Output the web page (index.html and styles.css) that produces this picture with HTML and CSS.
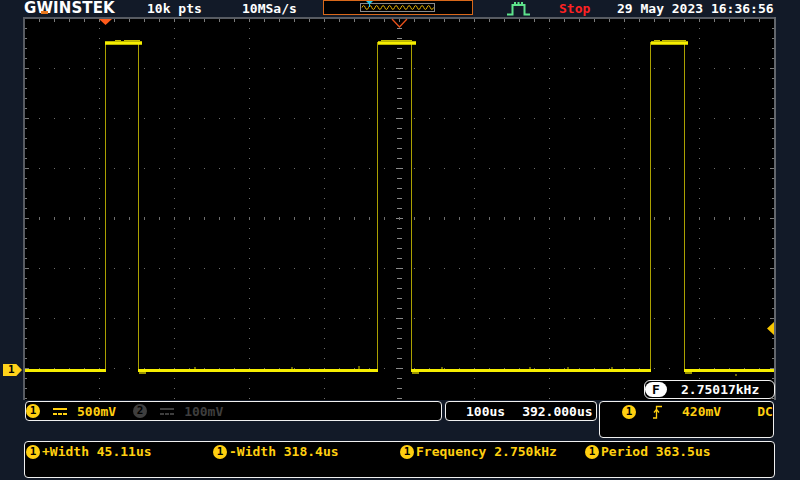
FILE: index.html
```html
<!DOCTYPE html>
<html>
<head>
    <title>GW Instek Scope Capture</title>
    <link rel="stylesheet" href="styles.css">
</head>
<body>
    <div class="scope">
        <header class="topbar">
            <div class="logo">G<span class="w">W</span>INSTEK</div>
            <span class="rec">10k pts</span>
            <span class="rate">10MSa/s</span>
            <svg class="memory" width="150" height="15" viewBox="0 0 150 15">
                <rect x="0.5" y="0.5" width="149" height="14" fill="#000" stroke="#d8681a"/>
                <rect x="37.5" y="3.5" width="74" height="8" fill="none" stroke="#8a8a8a"/>
                <path d="M39 7.5 q1.6 -4 3.25 0 t3.25 0 t3.25 0 t3.25 0 t3.25 0 t3.25 0 t3.25 0 t3.25 0 t3.25 0 t3.25 0 t3.25 0 t3.25 0 t3.25 0 t3.25 0 t3.25 0 t3.25 0 t3.25 0 t3.25 0 t3.25 0 t3.25 0 t3.25 0 t3.25 0" fill="none" stroke="#e2b000" stroke-width="1"/>
                <polygon points="43,1 50,1 46.5,4.5" fill="#22c4e6"/>
                <rect x="46" y="4" width="1" height="3" fill="#22c4e6"/>
            </svg>
            <svg class="trigmode" width="23" height="15" viewBox="0 0 23 15">
                <path d="M0 13.5 H5.5 V4 H17.5 V13.5 H23" fill="none" stroke="#5ee38c" stroke-width="2"/>
                <rect x="7" y="1" width="2" height="2" fill="#5ee38c"/>
                <rect x="10.5" y="1" width="2" height="2" fill="#5ee38c"/>
                <rect x="14" y="1" width="2" height="2" fill="#5ee38c"/>
            </svg>
            <span class="status">Stop</span>
            <span class="clock">29 May 2023 16:36:56</span>
        </header>

        <div class="screen">
            <div class="gutter">
                <div class="ch-marker">1</div>
            </div>
            <svg class="graticule" width="753" height="383" viewBox="23 17 753 383">
                <defs>
                    <pattern id="vdots" x="24" y="18" width="75" height="10" patternUnits="userSpaceOnUse">
                        <rect width="1" height="1" fill="#6e6e6e"/>
                    </pattern>
                    <pattern id="hdots" x="24" y="18" width="15" height="50" patternUnits="userSpaceOnUse">
                        <rect width="1" height="1" fill="#6e6e6e"/>
                    </pattern>
                    <pattern id="vcenter" x="0" y="18" width="800" height="50" patternUnits="userSpaceOnUse">
                        <rect x="396" y="0" width="7" height="1" fill="#8a8a8a"/>
                        <rect x="397" y="10" width="5" height="1" fill="#8a8a8a"/>
                        <rect x="397" y="20" width="5" height="1" fill="#8a8a8a"/>
                        <rect x="397" y="30" width="5" height="1" fill="#8a8a8a"/>
                        <rect x="397" y="40" width="5" height="1" fill="#8a8a8a"/>
                    </pattern>
                    <pattern id="hcenter" x="24" y="0" width="15" height="800" patternUnits="userSpaceOnUse">
                        <rect x="0" y="217" width="1" height="3" fill="#6e6e6e"/>
                    </pattern>
                    <pattern id="topticks" x="24" y="0" width="15" height="800" patternUnits="userSpaceOnUse">
                        <rect x="0" y="19" width="1" height="3" fill="#7a7a7a"/>
                    </pattern>
                    <pattern id="sideticks" x="0" y="18" width="800" height="50" patternUnits="userSpaceOnUse">
                        <rect x="25" y="0" width="4" height="1" fill="#7a7a7a"/>
                        <rect x="25" y="10" width="2" height="1" fill="#7a7a7a"/>
                        <rect x="25" y="20" width="2" height="1" fill="#7a7a7a"/>
                        <rect x="25" y="30" width="2" height="1" fill="#7a7a7a"/>
                        <rect x="25" y="40" width="2" height="1" fill="#7a7a7a"/>
                        <rect x="770" y="0" width="4" height="1" fill="#7a7a7a"/>
                        <rect x="772" y="10" width="2" height="1" fill="#7a7a7a"/>
                        <rect x="772" y="20" width="2" height="1" fill="#7a7a7a"/>
                        <rect x="772" y="30" width="2" height="1" fill="#7a7a7a"/>
                        <rect x="772" y="40" width="2" height="1" fill="#7a7a7a"/>
                    </pattern>
                </defs>

                <rect x="23" y="17" width="753" height="383" fill="#000"/>
                <rect x="25" y="19" width="749" height="381" fill="url(#vdots)"/>
                <rect x="25" y="19" width="749" height="381" fill="url(#hdots)"/>
                <rect x="395" y="19" width="9" height="381" fill="url(#vcenter)"/>
                <rect x="25" y="214" width="749" height="9" fill="url(#hcenter)"/>
                <rect x="25" y="19" width="749" height="4" fill="url(#topticks)"/>
                <rect x="25" y="19" width="749" height="381" fill="url(#sideticks)"/>

                <!-- frame -->
                <rect x="23" y="17" width="753" height="2" fill="#575b62"/>
                <rect x="23" y="17" width="2" height="383" fill="#575b62"/>
                <rect x="774" y="17" width="2" height="383" fill="#62666c"/>

                <!-- trace -->
                <path d="M105.5 370 V42 M138.5 42 V370 M377.5 370 V42 M411.5 42 V370 M650.5 370 V42 M684.5 42 V370" stroke="#aaa000" stroke-width="1" fill="none"/>
                <path d="M25 370.5 H106 M138 370.5 H378 M411 370.5 H651 M684 370.5 H774" stroke="#f6ee00" stroke-width="3" fill="none"/>
                <path d="M105 43 H142 M378 43 H416 M651 43 H688" stroke="#f6ee00" stroke-width="3.5" fill="none"/>
                <path d="M115 40.5 H121 M124 40.5 H140 M381 40.5 H412 M654 40.5 H660 M662 40.5 H686" stroke="#c8c000" stroke-width="1" fill="none"/>
                <path d="M139 373 H146 M412 373 H419 M685 373 H692" stroke="#9a9400" stroke-width="2" fill="none"/>
                <path d="M195 367 V369 M292 367 V369 M359 366 V369 M442 367 V369 M530 367 V369 M568 367 V369 M612 367 V369 M736 374 V376" stroke="#d8d000" stroke-width="1" fill="none"/>

                <!-- markers -->
                <polygon points="99,19 112,19 105.5,25" fill="#ff5a1a"/>
                <polyline points="392,19 399.5,27 407,19" fill="none" stroke="#e8501a" stroke-width="1.3"/>
                <polygon points="774,322 767,328.5 774,335" fill="#f7c600"/>
            </svg>
            <div class="rgutter"></div>

            <div class="counter">
                <span class="counter-tag">F</span>
                <span class="counter-value">2.75017kHz</span>
            </div>
        </div>

        <div class="panels">
            <div class="panel vert">
                <span class="ch ch1">1</span>
                <svg class="coupling" width="14" height="7" viewBox="0 0 14 7">
                    <rect x="0" y="0" width="14" height="2" fill="#ffcf10"/>
                    <rect x="0" y="5" width="4" height="2" fill="#ffcf10"/>
                    <rect x="5" y="5" width="4" height="2" fill="#ffcf10"/>
                    <rect x="10" y="5" width="4" height="2" fill="#ffcf10"/>
                </svg>
                <span class="scale">500mV</span>
                <span class="ch ch2">2</span>
                <svg class="coupling" width="14" height="7" viewBox="0 0 14 7">
                    <rect x="0" y="0" width="14" height="2" fill="#3e3e3e"/>
                    <rect x="0" y="5" width="4" height="2" fill="#3e3e3e"/>
                    <rect x="5" y="5" width="4" height="2" fill="#3e3e3e"/>
                    <rect x="10" y="5" width="4" height="2" fill="#3e3e3e"/>
                </svg>
                <span class="scale off">100mV</span>
            </div>
            <div class="panel horiz">
                <span>100us</span>
                <span class="pos">392.000us</span>
            </div>
            <div class="panel trig">
                <div class="trig-row">
                    <span class="ch ch1">1</span>
                    <svg class="edge" width="9" height="14" viewBox="0 0 9 14">
                        <path d="M0 13 H3.5 V1.5 H9" fill="none" stroke="#ffcf10" stroke-width="1.3"/>
                        <path d="M1 7.5 L3.5 4.5 L6 7.5" fill="none" stroke="#ffcf10" stroke-width="1.3"/>
                    </svg>
                    <span class="level">420mV</span>
                    <span class="dc">DC</span>
                </div>
            </div>
        </div>

        <div class="meas">
            <div class="meas-item"><span class="ch ch1">1</span><span>+Width 45.11us</span></div>
            <div class="meas-item"><span class="ch ch1">1</span><span>-Width 318.4us</span></div>
            <div class="meas-item"><span class="ch ch1">1</span><span>Frequency 2.750kHz</span></div>
            <div class="meas-item"><span class="ch ch1">1</span><span>Period 363.5us</span></div>
        </div>
    </div>
</body>
</html>
```

FILE: styles.css
```css
body {
    margin: 0;
    background: #121a28;
    font-family: 'DejaVu Sans Mono', 'Liberation Mono', monospace;
    font-size: 13px;
    font-weight: bold;
    color: #fff;
}

.scope {
    width: 800px;
    height: 480px;
    overflow: hidden;
    background: #121a28;
}

/* top status bar */
.topbar {
    display: flex;
    align-items: center;
    height: 17px;
    padding-left: 24px;
    white-space: nowrap;
}

.logo {
    width: 123px;
    font-family: 'DejaVu Sans', sans-serif;
    font-size: 15px;
    font-weight: bold;
    letter-spacing: 0.1px;
    line-height: 15px;
    color: #fff;
}

.logo .w {
    position: relative;
}

.logo .w::after {
    content: "";
    position: absolute;
    left: 5px;
    right: 5px;
    bottom: 3px;
    height: 3px;
    background: #e8781e;
}

.rec {
    width: 95px;
}

.rate {
    width: 81px;
}

.memory {
    display: block;
    align-self: flex-start;
}

.trigmode {
    display: block;
    margin-left: 34px;
    align-self: flex-start;
    margin-top: 1px;
}

.status {
    margin-left: 29px;
    width: 58px;
    color: #ff2222;
}

.clock {
    color: #fff;
}

/* waveform area */
.screen {
    position: relative;
    display: flex;
    height: 383px;
}

.gutter {
    position: relative;
    width: 23px;
}

.graticule {
    display: block;
}

.rgutter {
    width: 24px;
}

.ch-marker {
    position: absolute;
    left: 3px;
    top: 347px;
    width: 19px;
    height: 12px;
    background: #ffd21a;
    clip-path: polygon(0 0, 70% 0, 100% 50%, 70% 100%, 0 100%);
    color: #000;
    font-size: 11px;
    line-height: 12px;
    padding-left: 5px;
    box-sizing: border-box;
}

.counter {
    position: absolute;
    left: 644px;
    top: 363px;
    width: 131px;
    height: 19px;
    box-sizing: border-box;
    border: 1px solid #f2f2f2;
    border-radius: 6px;
    background: #000;
    display: flex;
    align-items: center;
}

.counter-tag {
    width: 22px;
    height: 15px;
    border-radius: 8px;
    background: #fff;
    color: #000;
    font-size: 13px;
    line-height: 15px;
    text-align: center;
}

.counter-value {
    margin-left: 14px;
}

/* settings panels */
.panels {
    display: flex;
    padding-left: 25px;
    margin-top: 1px;
    height: 37px;
}

.panel {
    box-sizing: border-box;
    border: 1px solid #f0f0f0;
    border-radius: 4px;
    background: #000;
}

.vert,
.horiz {
    display: flex;
    align-items: center;
    height: 20px;
}

.vert {
    width: 417px;
}

.horiz {
    width: 152px;
    margin-left: 3px;
    padding-left: 20px;
}

.horiz .pos {
    margin-left: 17px;
}

.trig {
    width: 175px;
    height: 37px;
    margin-left: 2px;
    padding: 2px 0 0 22px;
}

.trig-row {
    display: flex;
    align-items: center;
    height: 15px;
    color: #ffcf10;
}

.ch {
    display: inline-block;
    width: 14px;
    height: 14px;
    border-radius: 50%;
    color: #000;
    font-size: 11px;
    line-height: 14px;
    text-align: center;
    flex: none;
}

.ch1 {
    background: #ffcf10;
}

.ch2 {
    background: #3e3e3e;
}

.vert .coupling {
    display: block;
    margin-left: 13px;
}

.vert .scale {
    margin-left: 10px;
    color: #ffcf10;
}

.vert .ch2 {
    margin-left: 17px;
}

.vert .scale.off {
    color: #3e3e3e;
}

.edge {
    display: block;
    margin-left: 17px;
}

.level {
    margin-left: 20px;
}

.dc {
    margin-left: 36px;
}

/* measurement bar */
.meas {
    box-sizing: border-box;
    width: 751px;
    height: 37px;
    margin: 3px 0 0 24px;
    padding: 2px 0 0 1px;
    border: 1px solid #f0f0f0;
    border-radius: 4px;
    background: #000;
    display: grid;
    grid-template-columns: 187px 187px 185px auto;
    align-items: start;
    color: #ffcf10;
}

.meas-item {
    display: flex;
    align-items: center;
    height: 15px;
}

.meas-item span + span {
    margin-left: 2px;
}
```
